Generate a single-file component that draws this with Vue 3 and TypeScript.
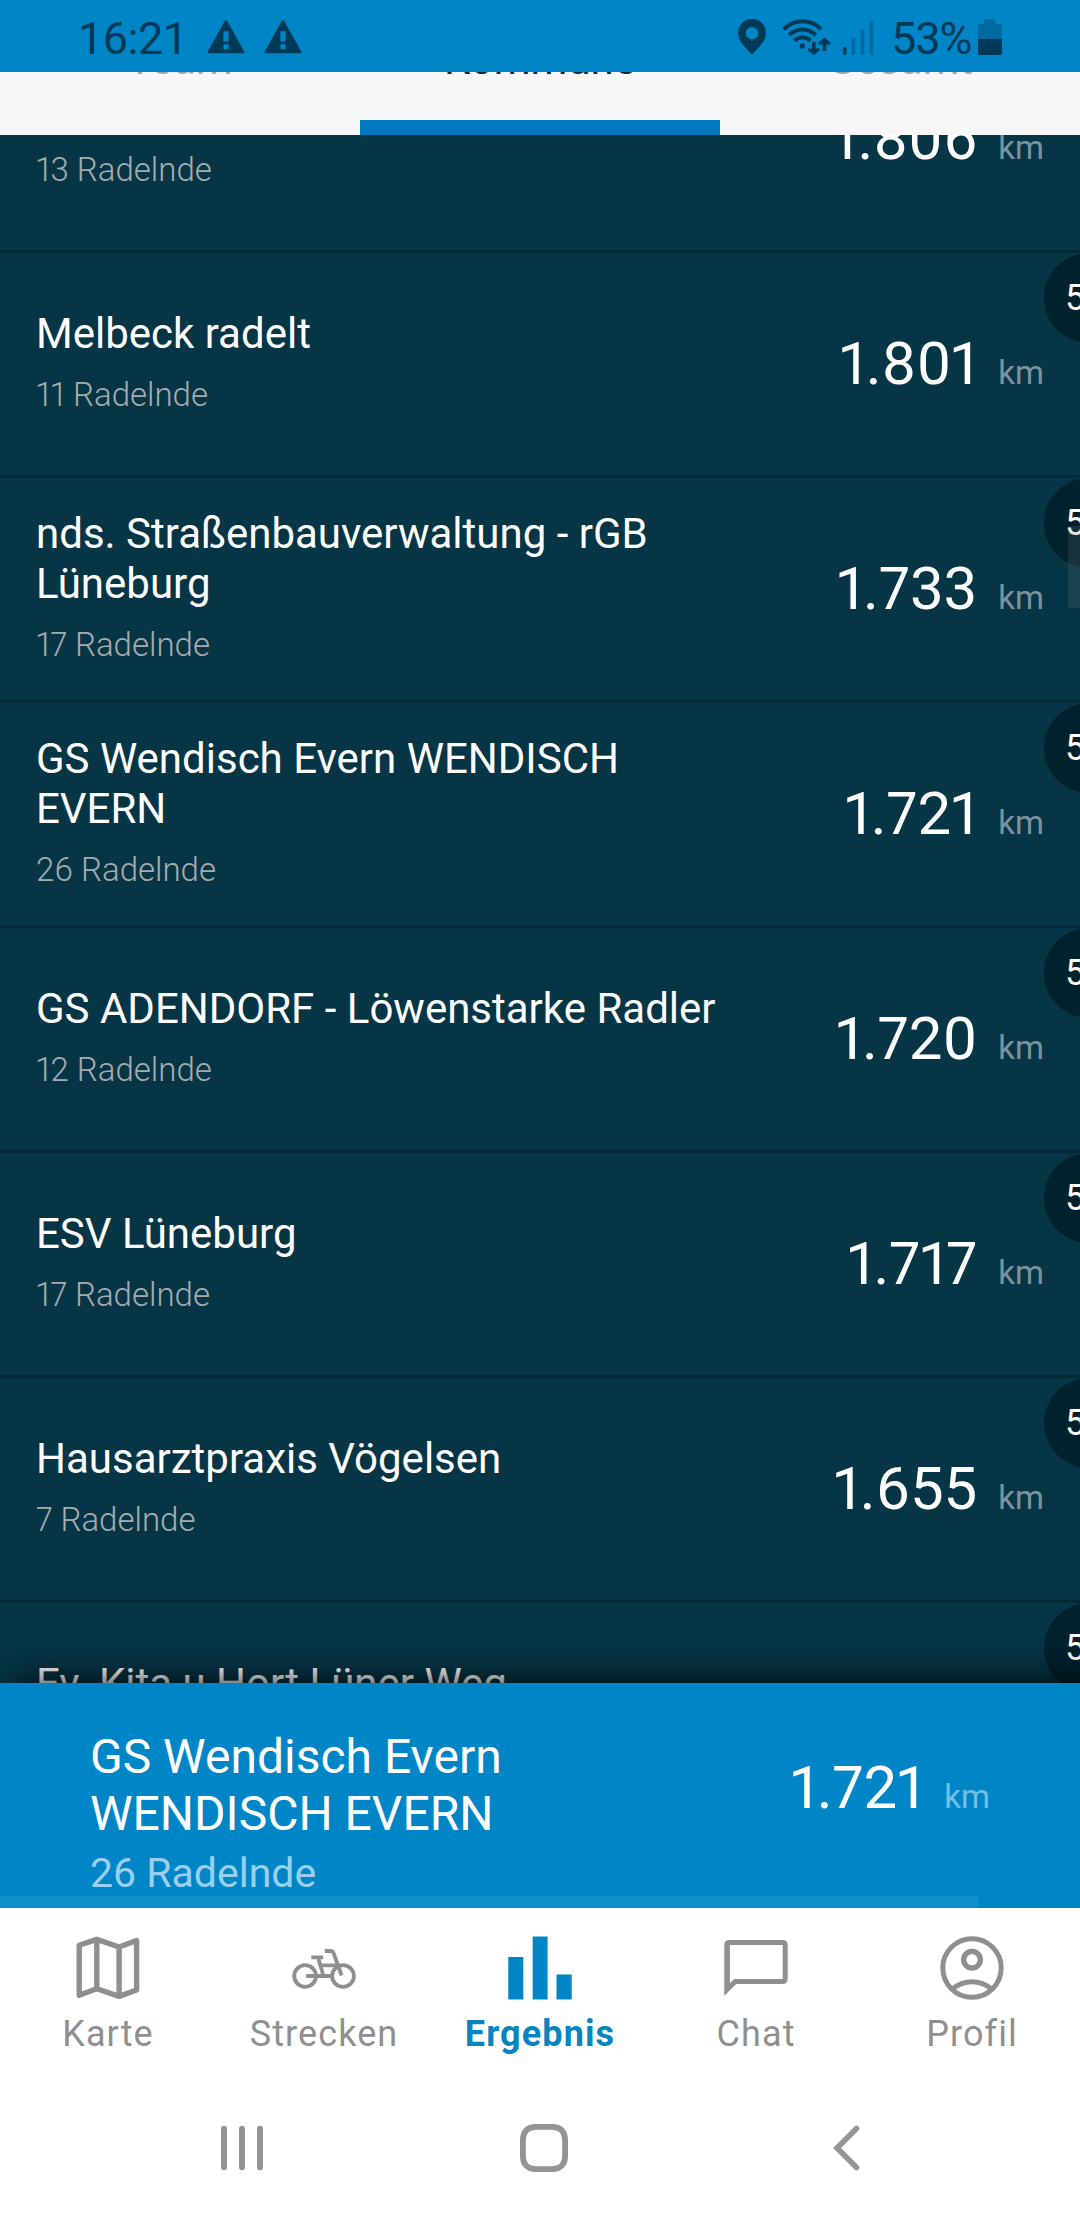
<script setup lang="ts">
interface Team {
  name: string
  riders: number
  km: string
}

const teams: Team[] = [
  { name: '\u00a0', riders: 13, km: '1.806' },
  { name: 'Melbeck radelt', riders: 11, km: '1.801' },
  { name: 'nds. Straßenbauverwaltung - rGB Lüneburg', riders: 17, km: '1.733' },
  { name: 'GS Wendisch Evern WENDISCH EVERN', riders: 26, km: '1.721' },
  { name: 'GS ADENDORF - Löwenstarke Radler', riders: 12, km: '1.720' },
  { name: 'ESV Lüneburg', riders: 17, km: '1.717' },
  { name: 'Hausarztpraxis Vögelsen', riders: 7, km: '1.655' },
]

const tabs = ['Team', 'Kommune', 'Gesamt']
const activeTab = 'Kommune'
</script>

<template>
  <div class="screen">
    <header class="status">
      <span class="clock">16:21</span>
      <svg v-for="n in 2" :key="n" class="warn" viewBox="0 0 38 34" width="38" height="34">
        <path fill-rule="evenodd" d="M17.6 1.2Q19 -.8 20.4 1.2L37.2 31.6Q38 33.2 36.3 33.2H1.7Q0 33.2 .8 31.6ZM16.4 11.3V21.4H21.6V11.3ZM16.4 24.2V29.2H21.6V24.2Z" />
      </svg>
      <span class="spacer"></span>
      <svg class="pin" viewBox="0 0 28 36" width="28" height="36">
        <path fill-rule="evenodd" d="M14 0C6.2 0 0 6.2 0 14C0 20.500 4.500 26 14 35.500C23.500 26 28 20.500 28 14C28 6.200 21.800 0 14 0ZM14 8A6.200 6.200 0 1 1 14 20.400A6.200 6.200 0 1 1 14 8Z" />
      </svg>
      <svg class="wifi" viewBox="0 0 50 36" width="50" height="36">
        <g fill="none" stroke="#003a57" stroke-width="4">
          <path d="M1.800 10.200Q10 2.300 20.500 2.300T39.200 10.200" />
          <path d="M7.200 16Q13.500 10.500 20.500 10.500T33.800 16" />
          <path d="M12.600 21.800Q16.500 18.300 20.500 18.300T28.400 21.800" />
        </g>
        <circle cx="20.300" cy="27" r="2.700" />
        <path d="M30 23h3.600v6.500h4v2L32 36L26 31.500v-2h4ZM40.700 32h3.600V25.500h4.200v-2L42.500 18.500L36.500 23.500v2h4.200Z" />
      </svg>
      <svg class="signal" viewBox="0 0 32 36" width="32" height="36">
        <rect x="1" y="28" width="3.600" height="8" rx="1.500" />
        <g fill="#0069a0">
          <rect x="9.500" y="19" width="3.800" height="17" rx="1.500" />
          <rect x="18.500" y="10" width="3.800" height="26" rx="1.500" />
          <rect x="27.500" y="2" width="3.800" height="34" rx="1.500" />
        </g>
      </svg>
      <span class="percent">53%</span>
      <svg class="battery" viewBox="0 0 24 36" width="24" height="36">
        <path fill="#0069a0" d="M7 0H16Q17.500 0 17.500 1.500V5H22.500Q24 5 24 6.500V20H0V6.500Q0 5 1.500 5H6V1.500Q6 0 7 0Z" />
        <path d="M0 20H24V34.500Q24 36 22.500 36H1.500Q0 36 0 34.500Z" />
      </svg>
    </header>

    <nav class="tabs">
      <div v-for="tab in tabs" :key="tab" class="tab" :class="{ active: tab === activeTab }">
        <span>{{ tab }}</span>
      </div>
    </nav>

    <main class="list">
      <div class="rows">
        <article v-for="(team, i) in teams" :key="i" class="row">
          <div class="info">
            <div class="name">{{ team.name }}</div>
            <div class="riders">{{ team.riders }} Radelnde</div>
          </div>
          <div class="distance">{{ team.km }}<span class="unit">km</span></div>
          <div class="rank">5</div>
        </article>
        <article class="row">
          <div class="info">
            <div class="name">Ev. Kita u Hort Lüner Weg</div>
            <div class="riders">&nbsp;</div>
          </div>
          <div class="rank">5</div>
        </article>
      </div>
      <div class="thumb"></div>
      <div class="shade"></div>
    </main>

    <section class="own">
      <div class="own-info">
        <div class="own-name">GS Wendisch Evern<br />WENDISCH EVERN</div>
        <div class="own-riders">26 Radelnde</div>
      </div>
      <div class="distance">1.721<span class="unit">km</span></div>
      <div class="own-thumb"></div>
    </section>

    <nav class="bottom">
      <div class="item">
        <svg viewBox="0 0 72 72" width="72" height="72" fill="none" stroke="#8f8f8f" stroke-width="5.400" stroke-linejoin="round">
          <path d="M7.200 13.200L24.800 7.400L47.100 15L64.600 8.500V58L47.100 64.400L24.800 56.800L7.200 63.300ZM24.800 7.400V56.800M47.100 15V64.400" />
        </svg>
        <span>Karte</span>
      </div>
      <div class="item">
        <svg viewBox="0 0 72 72" width="72" height="72" fill="none" stroke="#8f8f8f" stroke-width="3.800">
          <circle cx="17.100" cy="44" r="10.900" />
          <circle cx="55" cy="44" r="10.900" />
          <path d="M23.300 25.300H35.200M30.200 26L35.500 44M18.200 44H43.500M32 33.300H51M36.800 19H42.500Q45 19 45.700 21.300L53.600 43.500" />
        </svg>
        <span>Strecken</span>
      </div>
      <div class="item active">
        <svg viewBox="0 0 72 72" width="72" height="72" fill="#0086c7">
          <path d="M4.300 25H19.300V67.500H4.300ZM28.700 4.500H43.600V67.500H28.700ZM52.500 42.600H67.700V67.500H52.500Z" />
        </svg>
        <span>Ergebnis</span>
      </div>
      <div class="item">
        <svg viewBox="0 0 72 72" width="72" height="72" fill="#8f8f8f">
          <path fill-rule="evenodd" d="M4.300 63.700V13Q4.300 8 9.300 8H62.700Q67.700 8 67.700 13V47Q67.700 52 62.700 52H16.200ZM9.900 51.300L14.200 47H62.700V13H9.900Z" />
        </svg>
        <span>Chat</span>
      </div>
      <div class="item">
        <svg viewBox="0 0 72 72" width="72" height="72" fill="none" stroke="#8f8f8f" stroke-width="5">
          <circle cx="36" cy="36" r="29.200" />
          <circle cx="36" cy="27.700" r="8.300" stroke-width="5.400" />
          <path d="M16.500 57Q25 49.700 36 49.700T55.500 57" />
        </svg>
        <span>Profil</span>
      </div>
    </nav>

    <footer class="system">
      <svg viewBox="0 0 60 60" width="60" height="60" fill="none" stroke="#949494" stroke-width="6" stroke-linecap="round">
        <path d="M12 10.800V49.300M30 10.800V49.300M48 10.800V49.300" />
      </svg>
      <svg viewBox="0 0 60 60" width="60" height="60" fill="none" stroke="#949494" stroke-width="5.800">
        <path d="M22 8.900H38C46.500 8.900 51.100 13.500 51.100 22V38C51.100 46.500 46.500 51.100 38 51.100H22C13.500 51.100 8.900 46.500 8.900 38V22C8.900 13.500 13.500 8.900 22 8.900Z" />
      </svg>
      <svg viewBox="0 0 60 60" width="60" height="60" fill="none" stroke="#949494" stroke-width="5.600" stroke-linecap="round">
        <path d="M40.500 10.500L21 30L40.500 49.500" />
      </svg>
    </footer>
  </div>
</template>

<style>
body {
  margin: 0;
}
</style>

<style scoped>
.screen {
  display: flex;
  flex-direction: column;
  width: 1080px;
  height: 2220px;
  overflow: hidden;
  background: #fff;
  font-family: Roboto, 'Liberation Sans', sans-serif;
}
.screen svg {
  display: block;
  flex: none;
}
.status {
  display: flex;
  box-sizing: border-box;
  position: relative;
  z-index: 2;
  flex: none;
  height: 72px;
  padding: 19px 78px 0 78px;
  background: #0086c7;
  color: #003a57;
  fill: #003a57;
}
.clock,
.percent {
  margin-top: -7px;
  font-size: 45px;
  line-height: 54px;
}
.clock {
  width: 129px;
  letter-spacing: -0.5px;
}
.warn {
  margin: 1px 19px 0 0;
}
.spacer {
  flex: 1;
}
.pin {
  margin-right: 16px;
}
.wifi {
  margin-right: 10px;
}
.signal {
  margin-right: 17px;
}
.percent {
  width: 87px;
  letter-spacing: -1px;
}
.tabs {
  display: flex;
  flex: none;
  height: 63px;
  background: #f7f7f7;
}
.tab {
  display: flex;
  box-sizing: border-box;
  width: 360px;
  justify-content: center;
  border-bottom: 15px solid transparent;
  color: #98a8b6;
  font-size: 42px;
  line-height: 50px;
}
.tab span {
  margin-top: -37px;
}
.tab.active {
  border-color: #007abf;
  color: #003048;
}
.list {
  position: relative;
  flex: none;
  height: 1548px;
  overflow: hidden;
  background: #063546;
}
.rows {
  margin-top: -110px;
}
.row {
  display: flex;
  box-sizing: border-box;
  position: relative;
  align-items: center;
  justify-content: space-between;
  height: 225px;
  padding: 0 36px;
  border-top: 3px solid #042a38;
}
.info {
  width: 690px;
  padding-bottom: 5px;
}
.name {
  color: #fff;
  font-size: 42px;
  line-height: 50px;
}
.riders {
  margin-top: 16px;
  color: #a6acae;
  font-size: 33px;
  font-variant-numeric: proportional-nums;
  font-weight: 300;
  line-height: 39px;
}
.distance {
  padding-top: 8px;
  color: #fff;
  font-size: 60px;
  font-variant-numeric: proportional-nums;
  line-height: 70px;
  white-space: nowrap;
}
.unit {
  margin-left: 21px;
  color: rgba(255, 255, 255, 0.48);
  font-size: 33px;
}
.rank {
  position: absolute;
  top: 0;
  left: 1044px;
  box-sizing: border-box;
  width: 90px;
  height: 90px;
  padding-left: 21px;
  border-radius: 50%;
  background: #01212d;
  color: #fff;
  font-size: 36px;
  line-height: 90px;
}
.thumb {
  position: absolute;
  top: 391px;
  right: 0;
  width: 12px;
  height: 82px;
  background: rgba(128, 128, 128, 0.18);
}
.shade {
  position: absolute;
  right: -60px;
  bottom: -100px;
  left: 14px;
  height: 100px;
  box-shadow: 0 0 36px rgba(0, 0, 0, 0.95);
}
.own {
  display: flex;
  box-sizing: border-box;
  position: relative;
  flex: none;
  justify-content: space-between;
  height: 225px;
  padding: 45px 90px 0;
  background: #0086c7;
}
.own-name {
  color: #fff;
  font-size: 48px;
  line-height: 57px;
}
.own-riders {
  margin-top: 7px;
  color: #99d0ee;
  font-size: 41px;
  line-height: 48px;
}
.own .distance {
  margin-top: 17px;
}
.own .unit {
  color: #73bfe4;
}
.own-thumb {
  position: absolute;
  bottom: 0;
  left: 0;
  width: 978px;
  height: 12px;
  background: rgba(255, 255, 255, 0.07);
}
.bottom {
  display: flex;
  flex: none;
  height: 180px;
  padding-top: 24px;
  box-sizing: border-box;
  color: #8f8f8f;
}
.item {
  display: flex;
  width: 216px;
  flex-direction: column;
  align-items: center;
  font-size: 36px;
  letter-spacing: 1.1px;
  line-height: 42px;
}
.item span {
  margin-top: 9px;
}
.item.active {
  color: #0884c0;
  font-weight: 700;
}
.system {
  display: grid;
  grid-template-columns: repeat(3, 302px);
  justify-items: center;
  padding: 30px 0 0 91px;
}
</style>
